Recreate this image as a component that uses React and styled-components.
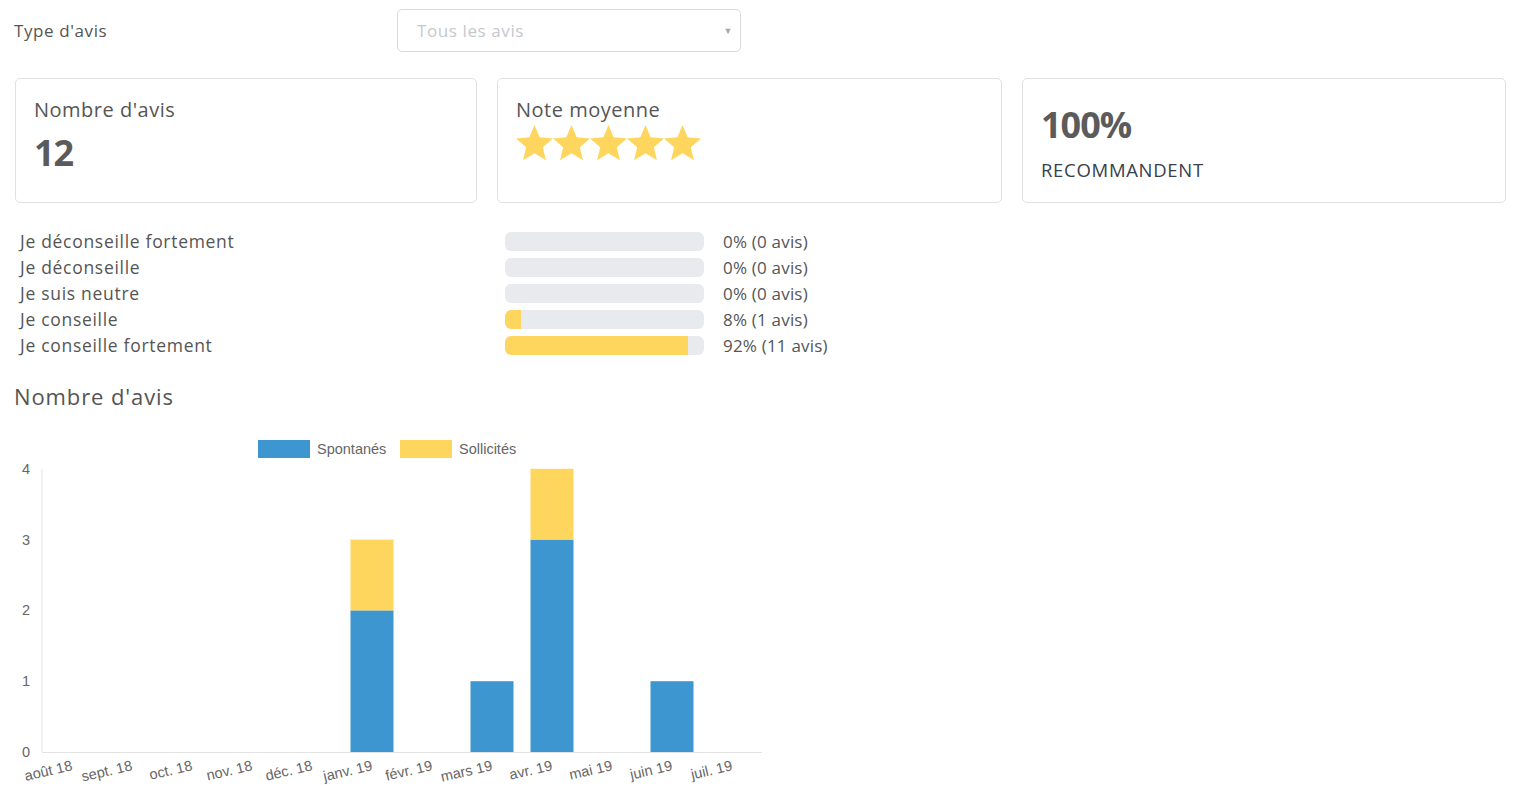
import React from "react";
import styled, { createGlobalStyle } from "styled-components";

const GlobalStyle = createGlobalStyle`
  html, body { margin: 0; padding: 0; background: #fff; }
  body { font-family: "Open Sans", "Noto Sans", sans-serif; color: #555; }
`;

const Page = styled.div`
  padding: 9px 16px 0 14px;
  width: 1522px;
  box-sizing: border-box;
`;

const FilterRow = styled.div`
  display: flex;
  align-items: center;
  height: 43px;
`;

const FilterLabel = styled.div`
  width: 383px;
  font-size: 17px;
  letter-spacing: 0.6px;
  color: #555;
`;

const Select = styled.div`
  width: 344px;
  height: 43px;
  box-sizing: border-box;
  border: 1px solid #d6d9dd;
  border-radius: 5px;
  display: flex;
  align-items: center;
  justify-content: space-between;
  padding: 0 7px 0 19px;
  font-size: 17px;
  letter-spacing: 0.6px;
  color: #c4c8ce;
`;

const Caret = styled.span`
  font-size: 9px;
  color: #aaa;
`;

const Cards = styled.div`
  display: grid;
  grid-template-columns: 462px 505px 1fr;
  gap: 20px;
  margin-top: 26px;
  margin-left: 1px;
`;

const Card = styled.div`
  height: 125px;
  box-sizing: border-box;
  border: 1px solid #dfe1e4;
  border-radius: 5px;
  padding: ${(p) => p.$pad || "18px 18px"};
`;

const CardTitle = styled.div`
  font-size: 20px;
  letter-spacing: 0.5px;
  line-height: 26px;
  color: #555;
`;

const BigNumber = styled.div`
  font-size: 36px;
  font-weight: 700;
  line-height: 44px;
  color: #5b5b5b;
  letter-spacing: -1px;
  margin-top: ${(p) => p.$mt || "0"};
`;

const Recommend = styled.div`
  font-size: 18.5px;
  letter-spacing: 0.7px;
  color: #38404c;
  margin-top: 10px;
`;

const Stars = styled.div`
  display: flex;
  margin-top: 2px;
`;

const Ratings = styled.div`
  margin-top: 25px;
  margin-left: 6px;
  display: flex;
  flex-direction: column;
`;

const RatingRow = styled.div`
  display: grid;
  grid-template-columns: 466px 199px auto;
  column-gap: 19px;
  align-items: center;
  height: 26px;
`;

const RatingLabel = styled.div`
  font-size: 17.5px;
  letter-spacing: 0.7px;
  color: #555;
`;

const Track = styled.div`
  height: 19px;
  border-radius: 6px;
  background: #e9eaed;
  overflow: hidden;
`;

const Fill = styled.div`
  height: 100%;
  background: #fed65e;
  border-radius: 6px 0 0 6px;
`;

const RatingValue = styled.div`
  font-size: 17px;
  letter-spacing: 0.2px;
  color: #555;
`;

const SectionTitle = styled.h2`
  margin: 23px 0 0 0;
  font-size: 22px;
  letter-spacing: 0.9px;
  font-weight: 400;
  line-height: 30px;
  color: #555;
`;

const ChartWrap = styled.div`
  margin-top: 9px;
  width: 780px;
  height: 370px;
`;

const Star = ({ size = 37 }) => {
  const R = size / 1.902;
  const r = R * 0.45;
  const cx = size / 2;
  const cy = R;
  const pts = [];
  for (let i = 0; i < 10; i++) {
    const rad = i % 2 === 0 ? R : r;
    const a = (-90 + i * 36) * (Math.PI / 180);
    pts.push(`${(cx + rad * Math.cos(a)).toFixed(2)},${(cy + rad * Math.sin(a)).toFixed(2)}`);
  }
  return (
    <svg width={size} height={size} viewBox={`0 0 ${size} ${size}`}>
      <polygon points={pts.join(" ")} fill="#fed65e" />
    </svg>
  );
};

const ratings = [
  { label: "Je déconseille fortement", pct: 0, n: 0 },
  { label: "Je déconseille", pct: 0, n: 0 },
  { label: "Je suis neutre", pct: 0, n: 0 },
  { label: "Je conseille", pct: 8, n: 1 },
  { label: "Je conseille fortement", pct: 92, n: 11 },
];

const months = [
  "août 18", "sept. 18", "oct. 18", "nov. 18", "déc. 18", "janv. 19",
  "févr. 19", "mars 19", "avr. 19", "mai 19", "juin 19", "juil. 19",
];
const spont = [0, 0, 0, 0, 0, 2, 0, 1, 3, 0, 1, 0];
const solli = [0, 0, 0, 0, 0, 1, 0, 0, 1, 0, 0, 0];

const BLUE = "#3d96cf";
const YELLOW = "#fed65e";

const Chart = () => {
  const x0 = 28;
  const yBase = 332;
  const unit = 70.8;
  const cw = 60;
  const bw = 43;
  const font = '"Liberation Sans", Arial, sans-serif';
  return (
    <svg width="780" height="370" viewBox="0 0 780 370">
      <g fontFamily={font} fontSize="14.5" fill="#666">
        <rect x="244" y="20" width="52" height="18" fill={BLUE} />
        <text x="303" y="34">Spontanés</text>
        <rect x="386" y="20" width="52" height="18" fill={YELLOW} />
        <text x="445" y="34">Sollicités</text>
        {[0, 1, 2, 3, 4].map((v) => (
          <text key={v} x="16" y={yBase - v * unit + 5} textAnchor="end">{v}</text>
        ))}
      </g>
      <line x1={x0} y1={yBase - 4 * unit} x2={x0} y2={yBase} stroke="#e3e3e3" strokeWidth="1" />
      <line x1={x0} y1={yBase + 0.5} x2={748} y2={yBase + 0.5} stroke="#e3e3e3" strokeWidth="1" />
      {months.map((m, i) => {
        const bx = x0 + i * cw + 8.5;
        const hs = spont[i] * unit;
        const hy = solli[i] * unit;
        return (
          <g key={m}>
            {hs > 0 && <rect x={bx} y={yBase - hs} width={bw} height={hs} fill={BLUE} />}
            {hy > 0 && <rect x={bx} y={yBase - hs - hy} width={bw} height={hy} fill={YELLOW} />}
          </g>
        );
      })}
      <g fontFamily={font} fontSize="14.5" fill="#666">
        {months.map((m, i) => {
          const cx = x0 + i * cw + 31;
          return (
            <text key={m} textAnchor="end" transform={`translate(${cx} 350) rotate(-13)`}>{m}</text>
          );
        })}
      </g>
    </svg>
  );
};

export default function App() {
  return (
    <>
      <GlobalStyle />
      <Page>
        <FilterRow>
          <FilterLabel>Type d'avis</FilterLabel>
          <Select>
            <span>Tous les avis</span>
            <Caret>▼</Caret>
          </Select>
        </FilterRow>
        <Cards>
          <Card>
            <CardTitle>Nombre d'avis</CardTitle>
            <BigNumber $mt="8px">12</BigNumber>
          </Card>
          <Card>
            <CardTitle>Note moyenne</CardTitle>
            <Stars>
              {[0, 1, 2, 3, 4].map((i) => (
                <Star key={i} />
              ))}
            </Stars>
          </Card>
          <Card $pad="24px 18px">
            <BigNumber>100%</BigNumber>
            <Recommend>RECOMMANDENT</Recommend>
          </Card>
        </Cards>
        <Ratings>
          {ratings.map((r) => (
            <RatingRow key={r.label}>
              <RatingLabel>{r.label}</RatingLabel>
              <Track>
                <Fill style={{ width: `${r.pct}%` }} />
              </Track>
              <RatingValue>{`${r.pct}% (${r.n} avis)`}</RatingValue>
            </RatingRow>
          ))}
        </Ratings>
        <SectionTitle>Nombre d'avis</SectionTitle>
        <ChartWrap>
          <Chart />
        </ChartWrap>
      </Page>
    </>
  );
}
